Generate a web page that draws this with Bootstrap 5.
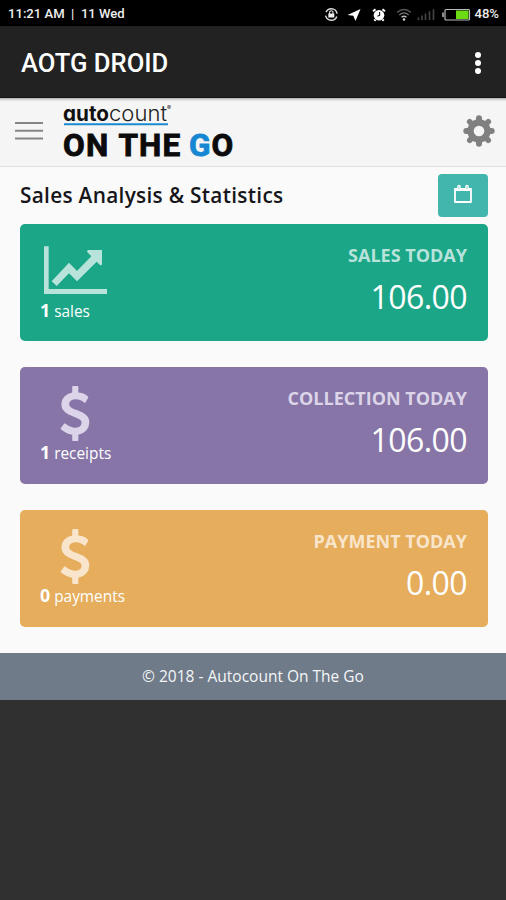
<!DOCTYPE html>
<html lang="en">
<head>
<meta charset="utf-8">
<meta name="viewport" content="width=device-width, initial-scale=1">
<title>AOTG DROID</title>
<link href="https://cdn.jsdelivr.net/npm/bootstrap@5.3.0/dist/css/bootstrap.min.css" rel="stylesheet">
<style>
body{background:#303030;font-family:"Open Sans",sans-serif;min-height:900px;overflow:hidden}
.status{height:26px;background:#000;color:#eee;font:500 13.1px/26px Roboto,sans-serif;padding:1px 7px 0 8px;white-space:pre}
.status svg,.tile svg,.brandbar svg,.appbar svg{display:block;flex:none}
.appbar{height:72px;background:#222;color:#fff;padding:2px 21px 0 21px;border-bottom:1px solid #161616}
.apptitle{font:500 25.6px/30px Roboto,sans-serif;padding-top:1px}
.brandbar{height:69px;background:#f5f5f5;border-bottom:1px solid #e1e1e1;padding:0 11px 2px 15px;box-shadow:inset 0 4px 3px -3px #999}
.page{background:#fafafa;height:486px;padding:7px 18px 0 20px}
.headrow{margin-bottom:7px}
.page h1{font-size:20.8px;font-weight:600;color:#16161a;letter-spacing:.3px;line-height:28px;padding-bottom:1px}
.calbtn{width:50px;height:43px;background:#42b5ac;border:0;border-radius:4px}
.tile{height:117px;border-radius:5px;color:#fff;padding:19px 21px 0 20px;margin-bottom:26px}
.tile-sales{background:#1ba688;--ic:#b8e3db}
.tile-coll{background:#8775a7;--ic:#dcd4e8}
.tile-pay{background:#e5ad5c;--ic:#f9e5cc}
.tile svg{fill:var(--ic)}
.tl{font-size:18px;font-weight:700;line-height:24px;color:var(--ic)}
.amt{font-size:32px;letter-spacing:-.55px;line-height:44px;margin-top:8px}
.cnt{font-size:15.4px;line-height:24px;margin-top:-1px}
.cnt b{font-size:17.8px}
.foot{height:47px;background:#6f7b88;color:#f4f6f8;font-size:15.5px}
</style>
</head>
<body>
<div class="status d-flex align-items-center justify-content-between">
  <span>11:21 AM  |  11 Wed</span>
  <div class="d-flex align-items-center">
    <svg width="150" height="24" viewBox="324 1 150 24" fill="none" stroke="#ddd">
      <circle cx="331.3" cy="13.5" r="5.8" stroke-width="1.4" stroke-dasharray="14.5 3.7" stroke-dashoffset="-2"/>
      <path d="M328.3 12.5h6v4h-6z" fill="#eee" stroke="none"/><path d="M329.6 13v-2.2q1.700-2.200 3.400 0V13" stroke-width="1.100"/>
      <path d="M347.500 14 360.500 8 355.500 20 353.300 14.800z" fill="#fff" stroke="none"/>
      <circle cx="379" cy="14.200" r="5.300" fill="#fff" stroke="none"/><path d="M373 10.300 375.500 8.300M385 10.300 382.500 8.300M375.500 18.500l-1.200 1.300M382.500 18.500l1.200 1.300" stroke="#fff" stroke-width="2"/><path d="M379.600 11v3.400l-2.300.8" stroke="#222" stroke-width="1.200"/>
      <g stroke-width="1.300"><path d="M397 11.500q7-6 14 0" stroke="#555"/><path d="M399.300 14q4.700-4.200 9.400 0" stroke="#777"/><path d="M401.500 16.300q2.500-2.200 5 0" stroke="#bbb"/></g><circle cx="404" cy="18.500" r="1.200" fill="#ddd" stroke="none"/>
      <path d="M418.500 19v-2.500M422 19v-4.500M425.500 19v-6.500M429.500 19V10.300M433.500 19V8.300" stroke="#444" stroke-width="1.700"/>
      <rect x="445" y="8.500" width="24.500" height="10.500" rx="1" stroke="#bbb" stroke-width="1.200"/><path d="M443 11.500v4.500" stroke="#bbb" stroke-width="1.500"/><path d="M456 9.500h12.500V18H456z" fill="#6bdc14" stroke="none"/>
    </svg>
    <span>48%</span>
  </div>
</div>
<header class="appbar d-flex align-items-center justify-content-between">
  <span class="apptitle">AOTG DROID</span>
  <svg width="14" height="26" viewBox="0 0 14 26" fill="#fff"><circle cx="7" cy="5" r="3"/><circle cx="7" cy="13" r="3"/><circle cx="7" cy="21" r="3"/></svg>
</header>
<nav class="brandbar d-flex align-items-center">
  <svg width="28" height="20" viewBox="0 0 28 20" stroke="#858585" stroke-width="2"><path d="M0 2h28M0 9.800h28M0 17.600h28"/></svg>
  <svg class="ms-3" width="180" height="66" viewBox="59 98 180 66" font-family="Inter,sans-serif">
    <g font-size="20.500" style="font-feature-settings:'cv11'">
    <text x="63" y="121" font-weight="700" fill="#111" textLength="46" lengthAdjust="spacingAndGlyphs">auto</text>
    <text x="109" y="121" font-weight="300" fill="#222" textLength="58" lengthAdjust="spacingAndGlyphs">count</text></g>
    <text x="167" y="110" font-size="6" fill="#222">®</text>
    <path d="M64 124.300h104" stroke="#1a8ad0" stroke-width="2"/>
    <g font-family="Roboto,sans-serif" font-weight="700" font-size="31.500" fill="#0b0b0b" stroke="#0b0b0b" stroke-width=".9">
    <text transform="translate(63 155.500)" letter-spacing="1.400">ON</text>
    <text transform="translate(118.500 155.500)" letter-spacing="1.100">THE</text>
    <text transform="translate(189 155.500)" fill="#1687d2" stroke="#1687d2">G</text>
    <text transform="translate(211.500 155.500)">O</text></g>
  </svg>
  <svg class="ms-auto" width="32" height="32" viewBox="-16 -16 32 32" stroke="#808080" fill="none">
    <circle r="8.500" stroke-width="6.400"/>
    <g stroke-width="6" stroke-linecap="round"><path d="M0-12.700V-10M0 12.700V10M-12.700 0H-10M12.700 0H10"/><path stroke-width="5.500" d="M-9.300-9.300-7-7M9.300 9.300 7 7M-9.300 9.300-7 7M9.300-9.300 7-7"/></g>
  </svg>
</nav>
<main class="page">
  <div class="headrow d-flex align-items-center justify-content-between">
    <h1 class="mb-0">Sales Analysis &amp; Statistics</h1>
    <button class="calbtn btn p-0 pb-1 d-flex align-items-center justify-content-center" aria-label="Choose date">
      <svg width="18" height="20" viewBox="0 0 18 20"><path d="M1 5h16v13H1z" fill="none" stroke="#fff" stroke-width="1.800" stroke-linejoin="round"/><path d="M.5 4h17v3H.5z" fill="#fff"/><path d="M5 2.500v3M13 2.500v3" stroke="#fff" stroke-width="3.600" stroke-linecap="round"/><path d="M5 2v3M13 2v3" stroke="#83cfc8" stroke-width=".8"/></svg>
    </button>
  </div>
  <section class="tile tile-sales d-flex justify-content-between">
    <div><svg width="86" height="56" viewBox="120 84 258 168"><path d="M132 94h14v128h175v15H132z"/><path d="M155 199 207 143 231 168 274 124 262 112Q260 105 266 105H306V147Q305 154 299 149L290 140 231 199 207 175 170 213z"/></svg>
      <div class="cnt"><b>1</b> <span>sales</span></div></div>
    <div class="text-end"><div class="tl">SALES TODAY</div><div class="amt">106.00</div></div>
  </section>
  <section class="tile tile-coll d-flex justify-content-between">
    <div><svg width="72" height="55" viewBox="-245 0 2346 1792"><path d="M1362 1185q0 153-99.500 263.500t-258.500 136.500v175q0 14-9 23t-23 9h-135q-13 0-22.500-9.500t-9.500-22.500v-175q-66-9-127.500-31t-101.500-44.500-74-48-46.500-37.500-17.500-18q-17-21-2-41l103-135q7-10 23-12 15-2 24 9l2 2q113 99 243 125 37 8 74 8 81 0 142.500-43t61.500-122q0-28-15-53t-33.500-42-58.500-37.500-66-32-80-32.500q-39-16-61.500-25t-61.500-26.500-62.500-31-56.500-35.500-53.500-42.500-43.500-49-35.500-58-21-66.500-8.500-78q0-138 98-242t255-134v-180q0-13 9.500-22.500t22.500-9.500h135q14 0 23 9t9 23v176q57 6 110.500 23t87 33.500 63.500 37.500 39 29 15 14q17 18 5 38l-81 146q-8 15-23 16-14 3-27-7-3-3-14.500-12t-39-26.500-58.500-32-74.500-26-85.500-11.500q-95 0-155 43t-60 111q0 26 8.500 48t29.500 41.500 39.500 33 56 31 60.500 27 70 27.500q53 20 81 31.500t76 35 75.500 42.500 62 50 53 63.500 31.500 76.500 13 94z" id="usd"/></svg>
      <div class="cnt"><b>1</b> <span>receipts</span></div></div>
    <div class="text-end"><div class="tl">COLLECTION TODAY</div><div class="amt">106.00</div></div>
  </section>
  <section class="tile tile-pay d-flex justify-content-between">
    <div><svg width="72" height="55" viewBox="-245 0 2346 1792"><use href="#usd"/></svg>
      <div class="cnt"><b>0</b> <span>payments</span></div></div>
    <div class="text-end"><div class="tl">PAYMENT TODAY</div><div class="amt">0.00</div></div>
  </section>
</main>
<footer class="foot d-flex align-items-center justify-content-center"><span>© 2018 - Autocount On The Go</span></footer>
<script src="https://cdn.jsdelivr.net/npm/bootstrap@5.3.0/dist/js/bootstrap.bundle.min.js"></script>
</body>
</html>
